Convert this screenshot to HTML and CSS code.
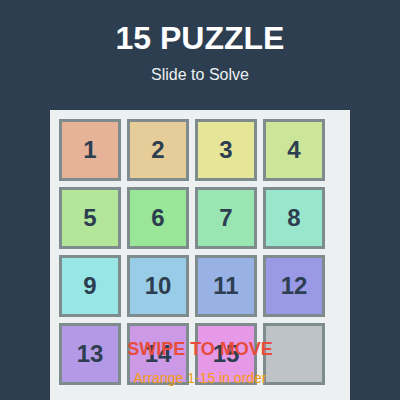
FILE: index.html
```html
<!DOCTYPE html>
<html lang="en">
<head>
<meta charset="utf-8">
<title>15 Puzzle</title>
<link rel="stylesheet" href="styles.css">
</head>
<body>
<main class="app">
  <h1 class="title">15 PUZZLE</h1>
  <p class="subtitle">Slide to Solve</p>
  <section class="board">
    <div class="grid">
      <div class="tile" style="background:hsl(20,60%,75%)">1</div>
      <div class="tile" style="background:hsl(40,60%,75%)">2</div>
      <div class="tile" style="background:hsl(60,60%,75%)">3</div>
      <div class="tile" style="background:hsl(80,60%,75%)">4</div>
      <div class="tile" style="background:hsl(100,60%,75%)">5</div>
      <div class="tile" style="background:hsl(120,60%,75%)">6</div>
      <div class="tile" style="background:hsl(140,60%,75%)">7</div>
      <div class="tile" style="background:hsl(160,60%,75%)">8</div>
      <div class="tile" style="background:hsl(180,60%,75%)">9</div>
      <div class="tile" style="background:hsl(200,60%,75%)">10</div>
      <div class="tile" style="background:hsl(220,60%,75%)">11</div>
      <div class="tile" style="background:hsl(240,60%,75%)">12</div>
      <div class="tile" style="background:hsl(260,60%,75%)">13</div>
      <div class="tile" style="background:hsl(280,60%,75%)">14</div>
      <div class="tile" style="background:hsl(300,60%,75%)">15</div>
      <div class="tile tile-empty"></div>
    </div>
    <div class="message">
      <div class="message-title">SWIPE TO MOVE</div>
      <div class="message-sub">Arrange 1-15 in order</div>
    </div>
  </section>
</main>
</body>
</html>
```

FILE: styles.css
```css
html, body {
  margin: 0;
  padding: 0;
  height: 100%;
  overflow: hidden;
}

body {
  background: #2c3e50;
  font-family: "Liberation Sans", Arial, sans-serif;
}

.app {
  display: flex;
  flex-direction: column;
  align-items: center;
  padding-top: 20px;
}

.title {
  margin: 0;
  font-size: 32px;
  font-weight: bold;
  color: #ffffff;
  line-height: 37px;
}

.subtitle {
  margin: 9px 0 0;
  font-size: 16px;
  line-height: 18px;
  color: #ecf0f1;
}

.board {
  position: relative;
  box-sizing: border-box;
  width: 300px;
  height: 290px;
  margin-top: 26px;
  padding: 9px;
  background: #ecf0f1;
}

.grid {
  display: grid;
  grid-template-columns: repeat(4, 62px);
  grid-auto-rows: 62px;
  gap: 6px;
}

.tile {
  box-sizing: border-box;
  border: 3px solid #7f8c8d;
  display: flex;
  align-items: center;
  justify-content: center;
  font-size: 24px;
  font-weight: bold;
  color: #2c3e50;
}

.tile-empty {
  background: #bdc3c7;
}

.message {
  position: absolute;
  left: 0;
  right: 0;
  top: 229px;
  display: flex;
  flex-direction: column;
  align-items: center;
  gap: 10px;
}

.message-title {
  font-size: 18px;
  font-weight: bold;
  line-height: 21px;
  color: #e74c3c;
}

.message-sub {
  font-size: 14px;
  line-height: 16px;
  color: #f39c12;
}
```
